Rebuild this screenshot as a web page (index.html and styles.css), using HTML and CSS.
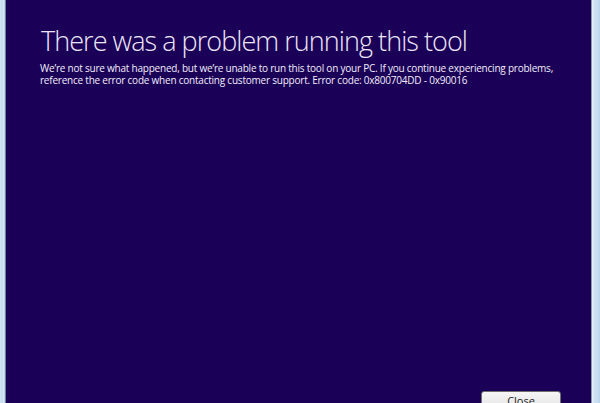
FILE: index.html
```html
<!DOCTYPE html>
<html>
<head>
<meta charset="utf-8">
<link rel="stylesheet" href="styles.css">
</head>
<body>
<div class="window">
  <div class="frame-left"></div>
  <div class="content">
    <div class="text">
      <h1 class="title">There was a problem running this tool</h1>
      <p class="message">We’re not sure what happened, but we’re unable to run this tool on your PC. If you continue experiencing problems, reference the error code when contacting customer support. Error code: 0x800704DD - 0x90016</p>
    </div>
    <div class="actions">
      <button class="btn">Close</button>
    </div>
  </div>
  <div class="frame-right"></div>
</div>
</body>
</html>
```
FILE: styles.css
```css
html, body {
  margin: 0;
  padding: 0;
  width: 600px;
  height: 403px;
  overflow: hidden;
}
.window {
  display: flex;
  width: 600px;
  height: 403px;
}
.frame-left {
  width: 5px;
  background: linear-gradient(90deg, #cfe3f3 0, #c4dcef 3px, #e6f1fa 4px, #9fb8cf 5px);
  border-right: 1px solid #6f7fa0;
}
.frame-right {
  width: 8px;
  background: linear-gradient(90deg, #e9f3fb 0, #cfe3f3 2px, #c6ddf0 6px, #b9d2e8 8px);
  border-left: 1px solid #8a9ab5;
}
.content {
  flex: 1;
  background: #1b0058;
  display: flex;
  flex-direction: column;
  justify-content: space-between;
  padding: 0 30px 0 34px;
}
.text {
  padding-top: 24px;
}
.title {
  margin: 0 0 0 1px;
  font-family: "Open Sans", sans-serif;
  font-weight: 300;
  font-size: 27px;
  line-height: 34px;
  color: #ece6f4;
  letter-spacing: -0.95px;
}
.message {
  margin: 4px 0 0;
  font-family: "Open Sans", sans-serif;
  font-size: 10px;
  line-height: 12px;
  letter-spacing: -0.22px;
  color: #f2eef8;
  width: 520px;
}
.actions {
  display: flex;
  justify-content: flex-end;
}
.btn {
  width: 80px;
  height: 24px;
  margin-bottom: -12px;
  border: 1px solid #707070;
  border-radius: 3px;
  background: linear-gradient(#f6f6f6, #dedede);
  font-family: "Open Sans", sans-serif;
  font-size: 11px;
  color: #1a1a1a;
  padding: 0 0 5px;
}
```
